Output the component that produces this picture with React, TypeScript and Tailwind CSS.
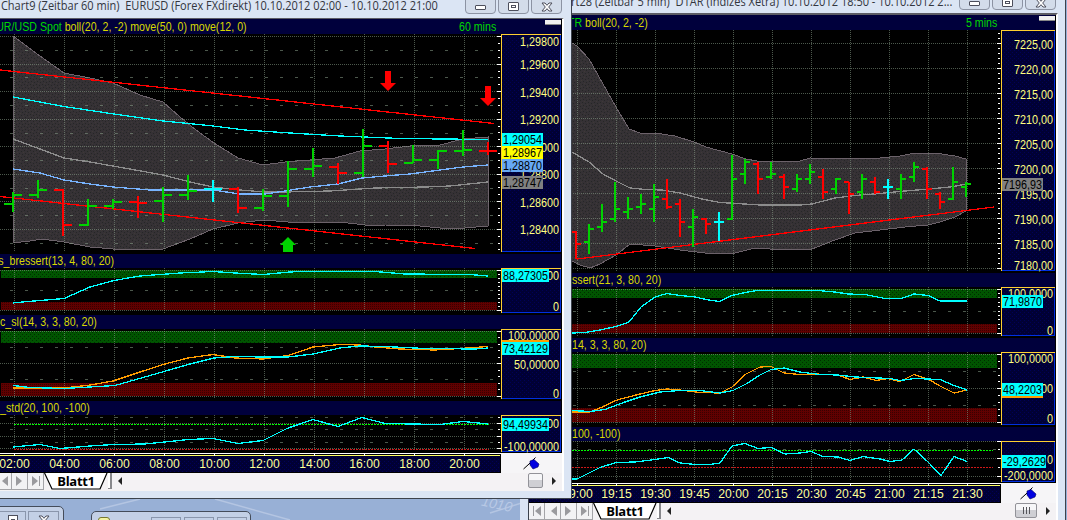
import type { ReactNode } from "react";

type Bar = [x: number, high: number, low: number, open: number, close: number, tone: "g" | "r" | "c"];
type Label = [text: string, y: number];
type Tag = { text: string; y: number; w: number; fill: string; under?: string };

const TONES = { g: "#00d200", r: "#ff0000", c: "#00ffff" };

const eurBars: Bar[] = [
  [13, 192, 212, 204, 195, "g"],
  [38, 180, 198, 195, 190, "g"],
  [63, 189, 236, 190, 225, "r"],
  [88, 199, 226, 225, 206, "g"],
  [113, 199, 209, 206, 202, "g"],
  [138, 196, 218, 202, 203, "r"],
  [163, 187, 222, 201, 195, "g"],
  [188, 175, 200, 195, 191, "g"],
  [213, 180, 202, 189, 189, "c"],
  [238, 187, 213, 189, 208, "r"],
  [263, 189, 211, 208, 196, "g"],
  [288, 161, 207, 196, 169, "g"],
  [313, 148, 177, 169, 166, "g"],
  [338, 163, 184, 167, 173, "r"],
  [363, 129, 177, 173, 146, "g"],
  [388, 141, 173, 146, 164, "r"],
  [413, 145, 163, 163, 160, "g"],
  [438, 150, 169, 160, 151, "g"],
  [463, 130, 156, 151, 150, "g"],
  [488, 142, 155, 151, 151, "r"],
];

const daxBars: Bar[] = [
  [576, 231, 259, 232, 244, "r"],
  [589, 224, 254, 242, 229, "g"],
  [602, 204, 232, 227, 222, "g"],
  [615, 182, 222, 219, 209, "g"],
  [628, 197, 219, 212, 209, "g"],
  [641, 194, 214, 207, 204, "g"],
  [654, 184, 222, 209, 197, "g"],
  [667, 179, 209, 199, 207, "r"],
  [680, 199, 237, 204, 222, "r"],
  [693, 209, 247, 227, 217, "g"],
  [706, 218, 234, 219, 224, "r"],
  [719, 212, 241, 222, 222, "c"],
  [732, 155, 220, 219, 179, "g"],
  [745, 159, 184, 174, 162, "g"],
  [758, 162, 194, 164, 179, "r"],
  [771, 162, 179, 177, 174, "g"],
  [784, 174, 199, 177, 187, "r"],
  [797, 174, 192, 189, 179, "g"],
  [810, 164, 184, 179, 172, "g"],
  [823, 169, 199, 177, 192, "r"],
  [836, 178, 194, 189, 179, "g"],
  [849, 182, 214, 182, 194, "r"],
  [862, 174, 199, 192, 179, "g"],
  [875, 177, 194, 182, 192, "r"],
  [888, 179, 199, 187, 187, "c"],
  [901, 174, 199, 189, 179, "g"],
  [914, 162, 182, 177, 167, "g"],
  [927, 167, 199, 169, 189, "r"],
  [940, 192, 209, 194, 202, "r"],
  [953, 167, 200, 199, 182, "g"],
  [966, 182, 197, 187, 184, "g"],
];

const EUR_BAND =
  "13,36 40,56 64,73 90,78 113,83 140,95 163,102 180,117 196,130 214,143 238,158 263,165 285,162 335,158 360,151 385,149 410,146 440,145 463,139 488,137 488,226 465,228 440,228 420,226 385,225 365,225 340,222 288,222 263,220 238,223 213,229 190,239 163,249 113,249 90,247 64,242 42,239 30,241 13,243";

const DAX_BAND =
  "560,30 572,43 577,46 589,59 603,84 616,107 629,129 640,133 655,133 675,136 694,142 706,147 732,154 746,159 757,161 800,161 810,158 850,159 880,158 900,156 915,153 935,153 955,156 966,159 966,211 955,217 940,222 928,225 905,227 880,230 855,233 835,240 812,249 770,249 755,248 735,253 720,254 705,253 680,250 655,246 630,244 616,255 600,264 590,268 580,265 572,261 560,255";

function Patterns() {
  return (
    <svg width="0" height="0" className="absolute">
      <defs>
        <pattern id="band" width="6" height="6" patternUnits="userSpaceOnUse">
          <rect width="6" height="6" fill="#353135" />
          <path d="M0 0h1v1h-1zM3 1h1v1h-1zM1 3h1v1h-1zM4 4h1v1h-1z" fill="#252725" />
          <path d="M5 2h1v1h-1zM2 5h1v1h-1z" fill="#3e3a36" />
        </pattern>
        <pattern id="green" width="4" height="4" patternUnits="userSpaceOnUse">
          <rect width="4" height="4" fill="#005400" />
          <path d="M0 0h1v1h-1zM2 2h1v1h-1z" fill="#002c00" />
        </pattern>
        <pattern id="red" width="2" height="2" patternUnits="userSpaceOnUse">
          <rect width="2" height="2" fill="#600000" />
          <path d="M0 0h1v1h-1z" fill="#380000" />
        </pattern>
        <pattern id="navy" width="4" height="4" patternUnits="userSpaceOnUse">
          <rect width="4" height="4" fill="#000034" />
          <path d="M0 0h1v1h-1zM2 2h1v1h-1z" fill="#000058" />
        </pattern>
      </defs>
    </svg>
  );
}

function Line({ pts, color, w = 1.3 }: { pts: string; color: string; w?: number }) {
  return <polyline points={pts} fill="none" stroke={color} strokeWidth={w} shapeRendering="crispEdges" />;
}

function Bars({ data, arm }: { data: Bar[]; arm: number }) {
  return (
    <g shapeRendering="crispEdges">
      {data.map(([x, h, l, o, c, t]) => (
        <g key={x} fill={TONES[t]}>
          <rect x={x - 1} y={h} width={2} height={l - h} />
          <rect x={x - arm} y={o - 1} width={arm} height={2} />
          <rect x={x} y={c - 1} width={arm} height={2} />
        </g>
      ))}
    </g>
  );
}

// bitmap-like widths of the terminal's UI font
function textWidth(s: string) {
  return [...s].reduce((n, ch) => n + (ch === "," ? 3 : ch === "-" ? 4 : 6), 0);
}

function Num({ text, x, y, fill, end }: { text: string; x: number; y: number; fill: string; end?: boolean }) {
  return (
    <text
      x={x}
      y={y + 4.5}
      fill={fill}
      textAnchor={end ? "end" : "start"}
      textLength={textWidth(text)}
      lengthAdjust="spacingAndGlyphs"
      className="font-['Liberation_Sans',sans-serif] text-[12.5px]"
    >
      {text}
    </text>
  );
}

type PlotProps = {
  x0: number;
  width: number;
  y: number;
  h: number;
  axis: number;
  axisH: number;
  cols: number[];
  rows: number[];
  dashes?: number[];
  zones?: [number, number, number, number];
  band?: string;
  minor: number[];
  labels: Label[];
  tags: Tag[];
  children: ReactNode;
};

function Plot({ x0, width, y, h, axis, axisH, cols, rows, dashes = [], zones, band, minor, labels, tags, children }: PlotProps) {
  const right = x0 + width;
  const plotRight = axis - 4;
  return (
    <svg viewBox={`${x0} ${y} ${width} ${h}`} width={width} height={h} className="block shrink-0 bg-black">
      {zones && (
        <>
          <rect x={x0 + 1} y={zones[0]} width={plotRight - x0 - 1} height={zones[1]} fill="url(#green)" />
          <rect x={x0 + 1} y={zones[2]} width={plotRight - x0 - 1} height={zones[3]} fill="url(#red)" />
        </>
      )}
      {band && <polygon points={band} fill="url(#band)" stroke="#6c626a" shapeRendering="crispEdges" />}
      <g stroke="#8aa08a" strokeOpacity="0.55" shapeRendering="crispEdges" fill="none">
        {cols.map((c) => (
          <path key={c} d={`M${c + 0.5} ${y}V${y + h - 2}`} strokeDasharray="1 1" />
        ))}
        {rows.map((r) => (
          <path key={r} d={`M${x0} ${r + 0.5}H${plotRight}`} strokeDasharray="1 1" />
        ))}
        {dashes.map((r) => (
          <path key={r} d={`M${cols[0] - 4} ${r + 0.5}H${plotRight}`} strokeDasharray="3 12" />
        ))}
      </g>
      {children}
      <g fill="#ffffff" shapeRendering="crispEdges">
        {minor.map((m) => (
          <rect key={m} x={axis - 3} y={m} width={2} height={1} />
        ))}
        {rows.map((r) => (
          <rect key={r} x={axis - 4} y={r} width={4} height={1} />
        ))}
      </g>
      <g shapeRendering="crispEdges">
        <rect x={axis} y={y} width={right - axis - 1} height={axisH} fill="url(#navy)" />
        <path d={`M${right - 1.5} ${y}V${y + axisH - 0.5}H${axis}`} stroke="#0030e0" fill="none" />
        <path d={`M${axis + 0.5} ${y + axisH}V${y + 0.5}H${right - 1}`} stroke="#ffd030" fill="none" />
      </g>
      {labels.map(([t, ly]) => (
        <Num key={t + ly} text={t} x={right - 3} y={ly} fill="#ffff80" end />
      ))}
      {tags.map((t) => (
        <g key={t.text}>
          {t.under && <rect x={axis + 1} y={t.under === "top" ? t.y - 2 : t.y + 1} width={t.w} height={14} fill="#ff9c00" />}
          <rect x={axis + 1} y={t.y} width={t.w} height={13} fill={t.fill} />
          <Num text={t.text} x={axis + 2} y={t.y + 6.5} fill="#000000" />
        </g>
      ))}
    </svg>
  );
}

function range(from: number, to: number, step: number) {
  const out: number[] = [];
  for (let v = from; v <= to + 0.01; v += step) out.push(Math.round(v));
  return out;
}

function Header({ children, right, className }: { children: ReactNode; right?: ReactNode; className: string }) {
  return (
    <div className={`flex shrink-0 items-center overflow-hidden whitespace-nowrap bg-[#00003c] text-[12.5px] leading-[14px] text-[#d8d800] ${className}`}>
      <span className="origin-left scale-x-[0.85]">{children}</span>
      {right}
    </div>
  );
}

function CaptionButtons({ className }: { className: string }) {
  const base = "flex h-[15px] items-center justify-center rounded-b-[4px] border border-[#8c93a3] bg-[#d3dcea]";
  return (
    <div className={`flex shrink-0 gap-0.5 ${className}`}>
      <div className={`${base} w-[31px]`}>
        <span className="mt-0.5 h-[5px] w-[11px] rounded-[1px] border border-[#4d4f5c] bg-white" />
      </div>
      <div className={`${base} w-[31px]`}>
        <span className="flex h-[9px] w-[11px] items-center justify-center rounded-[1px] border border-[#4d4f5c] bg-white">
          <span className="h-[3px] w-[5px] border border-[#4d4f5c]" />
        </span>
      </div>
      <div className={`${base} w-[31px]`}>
        <svg viewBox="0 0 12 10" className="h-[10px] w-3">
          <path d="M1 1h3l2 2.300L8 1h3L7.700 5 11 9H8L6 6.700 4 9H1l3.300-4z" fill="#fff" stroke="#4d4f5c" />
        </svg>
      </div>
    </div>
  );
}

function Pin() {
  return (
    <svg viewBox="0 0 17 13" className="h-[13px] w-[17px]">
      <path d="M0.500 12L6 7M6 7L12.500 0.500" stroke="#000" fill="none" />
      <path d="M7 4l4-1.500 5 4.500-1 3-5 2-3-4z" fill="#0000e0" stroke="#000060" strokeWidth="0.600" />
    </svg>
  );
}

function TimeAxis({ x0, width, axis, cols, times, h }: { x0: number; width: number; axis: number; cols: number[]; times: string[]; h: number }) {
  return (
    <div className="flex shrink-0 bg-[#f6f5f7]">
      <svg viewBox={`${x0} 0 ${axis - x0} ${h}`} width={axis - x0} height={h} className="block">
        <rect x={x0} width={axis - x0} height={h} fill="#000" />
        <rect x={x0} y="0" width={axis - x0} height="1" fill="#fff" />
        <rect x={x0} y="2" width={axis - x0 - 1} height="1" fill="#ffff60" />
        <rect x={x0} y="3" width={axis - x0 - 1} height={h - 4} fill="url(#navy)" />
        {cols.map((c, i) => (
          <g key={c}>
            <rect x={c} y="0" width="1" height="3" fill="#fff" />
            <text x={c + 0.5} y="15" textAnchor="middle" fill="#ffff98" textLength="30.5" lengthAdjust="spacingAndGlyphs" className="font-['Liberation_Sans',sans-serif] text-[13px]">
              {times[i]}
            </text>
          </g>
        ))}
      </svg>
      <div className="flex items-center justify-center" style={{ width: x0 + width - axis }}>
        <Pin />
      </div>
    </div>
  );
}

function NavButton({ flip, end }: { flip?: boolean; end?: boolean }) {
  return (
    <div className="flex h-full w-4 shrink-0 items-center justify-center border-r border-b border-[#a4a4a8] bg-[#f2f2f4]">
      <svg viewBox="0 0 10 12" className={`h-3 w-2.5 ${flip ? "-scale-x-100" : ""}`}>
        <path d="M1 1l6 5-6 5z" fill="#9a9a9e" />
        {end && <path d="M8.500 1v10" stroke="#9a9a9e" />}
      </svg>
    </div>
  );
}

function Sheets({ className, children, grip }: { className: string; children: ReactNode; grip?: boolean }) {
  return (
    <div className={`flex shrink-0 items-start overflow-hidden bg-[#f4f2f4] ${className}`}>
      {children}
      <div className="relative flex h-[17px] w-16 shrink-0 items-center justify-center">
        <svg viewBox="0 0 64 17" className="absolute inset-0 h-[17px] w-16">
          <path d="M0.500 0L8 16H56L63 0" fill="#fff" stroke="#000" strokeWidth="1.200" />
        </svg>
        <span className="relative text-[13px] leading-none font-bold tracking-[-0.3px] text-black font-['Open_Sans',sans-serif]">Blatt1</span>
      </div>
      <div className="h-4 w-1 shrink-0 border-r-2 border-b border-[#88888c] bg-white" />
      <svg viewBox="0 0 4 8" className="mt-1 ml-1.5 h-2 w-1 shrink-0">
        <path d="M4 0v8L0 4z" fill="#222" />
      </svg>
      <div className="grow" />
      <div
        className={`flex h-[15px] shrink-0 items-center justify-center gap-0.5 rounded-[2px] border border-[#929298] bg-linear-to-b from-[#f6f6f8] from-50% to-[#cfcfd4] to-50% ${grip ? "w-[22px]" : "w-[15px]"}`}
      >
        {grip && [0, 1, 2].map((i) => <span key={i} className="h-[7px] w-px bg-[#55555a]" />)}
      </div>
      <svg viewBox="0 0 4 8" className="mt-1 mr-1.5 ml-[9px] h-2 w-1 shrink-0">
        <path d="M0 0v8l4-4z" fill="#222" />
      </svg>
    </div>
  );
}

function Arrow({ x, y, up }: { x: number; y: number; up?: boolean }) {
  return up ? (
    <path d={`M${x} ${y}l8 8h-3v7h-10v-7h-3z`} fill="#00d200" />
  ) : (
    <path d={`M${x - 3} ${y}h6v12h5l-8 8-8-8h5z`} fill="#ff0000" />
  );
}

function EurWindow() {
  const cols = range(14, 464, 50);
  const g = { x0: 0, width: 562, axis: 501, cols };
  return (
    <div className="absolute top-0 left-0 z-10 flex h-[499px] w-[572px] flex-col border-r border-b border-[#3c424c] bg-[#dbe5f4]">
      <div className="flex h-[18px] shrink-0 items-start justify-between pr-[9px]">
        <span className="-mt-0.5 w-[440px] origin-left scale-x-[0.882] pl-px text-[12.5px] leading-[15px] whitespace-pre text-[#33363e] font-['Open_Sans',sans-serif]">
          {"Chart9 (Zeitbar 60 min)  EURUSD (Forex FXdirekt) 10.10.2012 02:00 - 10.10.2012 21:00"}
        </span>
        <CaptionButtons className="-mt-px" />
      </div>
      <div className="flex h-[473px] w-[564px] shrink-0 flex-col border-t border-r-2 border-t-[#5c5c64] border-r-white bg-black font-['Liberation_Sans',sans-serif]">
        <Header
          className="h-[15px] w-[561px] justify-between pl-[3px]"
          right={
            <span className="flex items-center">
              <span className="inline-block origin-left scale-x-[0.85] text-[#00d800]">60 mins</span>
              <span className="ml-[42px] h-[5px] w-4 self-start border-b border-[#888] bg-[#f0f0f0]" />
            </span>
          }
        >
          <span className="-ml-2 text-[#00d800]">UR/USD Spot</span> boll(20, 2, -2) move(50, 0) move(12, 0)
        </Header>
        <Plot
          {...g}
          y={34}
          h={220}
          axisH={218}
          band={EUR_BAND}
          rows={[36, 64, 91, 119, 146, 174, 201, 229]}
          dashes={[50, 77, 105, 133, 160, 188, 215, 243]}
          minor={range(43, 250, 6.88)}
          labels={[["1,29800", 41], ["1,29600", 64.5], ["1,29400", 92], ["1,29200", 119.5], ["1,29000", 147], ["1,28800", 174.5], ["1,28600", 202], ["1,28400", 229.5]]}
          tags={[
            { text: "1,28747", y: 176, w: 41, fill: "#808080" },
            { text: "1,28870", y: 159, w: 41, fill: "#66a8f4" },
            { text: "1,28967", y: 146, w: 41, fill: "#ffff00" },
            { text: "1,29054", y: 133, w: 41, fill: "#00ffff" },
          ]}
        >
          <Line color="#8c8c8c" pts="13,139 40,149 64,158 90,162 113,166 163,175 190,182 213,187 240,190 265,192 285,192 330,191 375,188 425,187 450,186 488,182" />
          <Line color="#78b4ff" pts="13,169 40,173 64,180 90,184 113,187 150,190 213,190 240,194 265,194 285,191 310,187 338,184 362,178 385,176 410,174 440,170 463,167 488,165" />
          <Line color="#00ffff" pts="13,97 64,106.500 114,114 163,121 213,126 245,130 290,133 340,136 400,138.500 488,139.500" />
          <Line color="#ff0000" pts="0,70 494,123.500" />
          <Line color="#ff0000" pts="0,196.500 475,248.500" />
          <Bars data={eurBars} arm={9} />
          <Arrow x={388} y={71} />
          <Arrow x={488} y={86} />
          <Arrow x={288} y={237} up />
        </Plot>
        <Header className="h-[14px] w-[561px]">
          <span className="-ml-0.5">s_bressert(13, 4, 80, 20)</span>
        </Header>
        <Plot
          {...g}
          y={268}
          h={47}
          axisH={45}
          zones={[270, 8, 302, 8]}
          rows={[270, 310]}
          dashes={[290]}
          minor={range(274, 308, 4)}
          labels={[["100,00000", 275], ["0", 306.5]]}
          tags={[{ text: "88,27305", y: 269, w: 47, fill: "#00ffff" }]}
        >
          <Line color="#00ffff" pts="13,303 28,301.500 64,298.500 90,287 114,280.500 140,276 180,273 213,271.500 235,273 263,274.500 290,272 302,271.500 375,271.500 405,274 470,274.500 488,276" />
        </Plot>
        <Header className="h-[14px] w-[561px]">c_sl(14, 3, 3, 80, 20)</Header>
        <Plot
          {...g}
          y={329}
          h={72}
          axisH={70}
          zones={[331, 12, 383, 13]}
          rows={[331, 363, 396]}
          dashes={[347, 379]}
          minor={range(337, 393, 6.5)}
          labels={[["100,00000", 335.5], ["50,00000", 364], ["0", 393]]}
          tags={[{ text: "73,42129", y: 342, w: 47, fill: "#00ffff", under: "top" }]}
        >
          <Line color="#ff9c00" pts="13,388 64,388 90,385 113,381 140,372 163,364.500 188,358 213,354.500 235,358 263,359 288,355.500 313,347 340,344.500 360,345 375,347 400,349 435,350 460,348.500 488,346.500" />
          <Line color="#00ffff" pts="13,385.500 30,387.500 64,388.500 90,387 115,385.500 150,375.500 190,364 214,358 235,356.500 263,357 288,357 313,354 340,348 360,346 385,346.500 425,348.500 475,349 488,348" />
        </Plot>
        <Header className="h-[14px] w-[561px]">_std(20, 100, -100)</Header>
        <Plot
          {...g}
          y={415}
          h={38}
          axisH={37}
          rows={[423, 436, 448]}
          dashes={[417, 429, 442]}
          minor={[417, 429, 442]}
          labels={[["100,00000", 423.5], ["-100,00000", 446]]}
          tags={[{ text: "94,49934", y: 418, w: 47, fill: "#00ffff" }]}
        >
          <path d="M14 424.500H489" stroke="#00ff00" strokeDasharray="2 1" shapeRendering="crispEdges" />
          <path d="M14 449.500H489" stroke="#d01818" strokeDasharray="2 1" shapeRendering="crispEdges" />
          <Line color="#00ffff" pts="13,447 40,444.500 60,448.500 90,446 113,444.500 145,444 165,442 188,439.500 213,438.500 238,443.500 263,440.500 288,428 300,424 313,419.500 338,426.500 362,417.500 385,423.500 440,424.500 463,421.500 488,424" />
        </Plot>
        <TimeAxis {...g} h={20} times={["02:00", "04:00", "06:00", "08:00", "10:00", "12:00", "14:00", "16:00", "18:00", "20:00"]} />
        <Sheets className="h-[18px]">
          <div className="flex h-[17px] w-11 shrink-0 justify-end">
            <NavButton flip />
            <NavButton />
            <NavButton end />
          </div>
        </Sheets>
      </div>
    </div>
  );
}

function DaxWindow() {
  const cols = range(577, 967, 39);
  const g = { x0: 529, width: 527, axis: 1001, cols };
  return (
    <div className="absolute top-0 left-[520px] flex h-[520px] w-[546px] flex-col overflow-hidden border-r border-[#3c424c] bg-[#dbe5f4] pl-2">
      <div className="flex h-[13px] shrink-0 items-start justify-between pr-[9px] pl-[43px]">
        <span className="-mt-1.5 w-[385px] origin-left scale-x-[0.882] text-[12.5px] leading-[15px] whitespace-pre text-[#33363e] font-['Open_Sans',sans-serif]">
          {"rt28 (Zeitbar 5 min)  D1AR (Indizes Xetra) 10.10.2012 18:50 - 10.10.2012 2..."}
        </span>
        <CaptionButtons className="-mt-[5px]" />
      </div>
      <div className="flex w-[530px] shrink-0 flex-col border-t-2 border-r-2 border-l border-t-[#5c5c64] border-r-white border-l-[#3c424c] bg-black font-['Liberation_Sans',sans-serif]">
        <Header
          className="h-[15px] w-[526px] justify-between pl-[39px]"
          right={
            <span className="flex items-center">
              <span className="inline-block origin-left scale-x-[0.85] text-[#00d800]">5 mins</span>
              <span className="ml-[36px] h-[5px] w-4 self-start border-b border-[#888] bg-[#f0f0f0]" />
            </span>
          }
        >
          <span className="text-[#00d800]">TR</span> boll(20, 2, -2)
        </Header>
        <Plot
          {...g}
          y={30}
          h={243}
          axisH={241}
          band={DAX_BAND}
          rows={[43, 68, 93, 118, 143, 168, 193, 218, 243, 268]}
          minor={range(33, 268, 5)}
          labels={[["7225,00", 44], ["7220,00", 69], ["7215,00", 94], ["7210,00", 119], ["7205,00", 144], ["7200,00", 169], ["7195,00", 194], ["7190,00", 219], ["7185,00", 244], ["7180,00", 265]]}
          tags={[{ text: "7196,93", y: 178, w: 41, fill: "#808080" }]}
        >
          <Line color="#8c8c8c" pts="572,152 589,162 603,174 616,181 630,188 645,189.500 662,190 680,193 702,199 720,202.500 760,205 800,205 812,204 835,198 855,195.500 880,193.500 905,191 935,188.500 950,187 967,184" />
          <Line color="#ff0000" pts="577,259 994,207" />
          <Bars data={daxBars} arm={5} />
        </Plot>
        <Header className="h-[14px] w-[526px] pl-[43px]">ssert(21, 3, 80, 20)</Header>
        <Plot
          {...g}
          y={287}
          h={51}
          axisH={49}
          zones={[289, 9, 324, 9]}
          rows={[289, 333]}
          dashes={[311]}
          minor={range(293, 330, 4.4)}
          labels={[["100,0000", 293.5], ["0", 330]]}
          tags={[{ text: "71,9870", y: 295, w: 41, fill: "#00ffff" }]}
        >
          <Line color="#00ffff" pts="572,333 585,332.500 600,330 616,326.500 629,322 641,307 655,297 667,293.500 680,295.500 695,297 706,299.500 719,301.500 732,295.500 745,292.500 757,290.500 818,290.500 835,292 848,294 865,294.500 885,298.500 901,298.500 914,294 928,295.500 940,301 967,301" />
        </Plot>
        <Header className="h-[14px] w-[526px] pl-[43px]">14, 3, 3, 80, 20)</Header>
        <Plot
          {...g}
          y={352}
          h={75}
          axisH={73}
          zones={[354, 14, 408, 14]}
          rows={[354, 388, 422]}
          dashes={[371, 405]}
          minor={range(361, 418, 6.8)}
          labels={[["100,0000", 358.5], ["50,0000", 388.5], ["0", 418.5]]}
          tags={[{ text: "48,2203", y: 383, w: 41, fill: "#00ffff", under: "bottom" }]}
        >
          <Line color="#ff9c00" pts="572,412 590,412 600,408 617,400 640,394 655,390.500 667,389 680,390 700,392.500 720,393 732,387 746,374 760,367 771,366.500 784,373 800,374.500 815,374 838,375 850,379.500 863,377 876,380.500 888,378.500 900,381.500 914,374.500 928,379 940,386 954,393 967,390" />
          <Line color="#00ffff" pts="572,410.500 590,411.500 605,409.500 625,402 640,397 660,392 680,390.500 700,390.500 720,393 733,390.500 746,384 760,375 771,369.500 784,368 800,372 820,374.500 838,375 855,377 890,378.500 900,380.500 915,378.500 940,379.500 954,385.500 967,390" />
        </Plot>
        <Header className="h-[14px] w-[526px] pl-[43px]">100, -100)</Header>
        <Plot
          {...g}
          y={441}
          h={42}
          axisH={41}
          rows={[441, 458, 476]}
          dashes={[449]}
          minor={[449, 467]}
          labels={[["0", 459], ["-200,0000", 475.5]]}
          tags={[{ text: "-29,2629", y: 455, w: 44, fill: "#00ffff" }]}
        >
          <path d="M572 450.500H993" stroke="#00ff00" strokeDasharray="2 1" shapeRendering="crispEdges" />
          <path d="M572 467.500H993" stroke="#d01818" strokeDasharray="2 1" shapeRendering="crispEdges" />
          <Line color="#00ffff" pts="572,479 577,479 600,467.500 616,462.500 635,462 655,459.500 668,457.500 680,463 695,464.500 710,464.500 720,463 732,446 745,443.500 758,448.500 771,447.500 785,454 800,453 811,451.500 823,456.500 838,457 850,460.500 863,456.500 880,459 890,461.500 902,460 914,449 928,462 941,475.500 954,456.500 967,461.500" />
        </Plot>
        <TimeAxis {...g} h={20} times={["19:00", "19:15", "19:30", "19:45", "20:00", "20:15", "20:30", "20:45", "21:00", "21:15", "21:30"]} />
        <Sheets className="h-[18px]" grip>
          <div className="flex h-[17px] w-16 shrink-0">
            <NavButton flip end />
            <NavButton flip />
            <NavButton />
            <NavButton end />
          </div>
        </Sheets>
      </div>
    </div>
  );
}

function Desktop() {
  return (
    <>
      <svg viewBox="0 0 530 21" className="absolute top-[499px] left-0 h-[21px] w-[530px]">
        <path d="M215 0L290 21M490 14L528 2M100 10L140 0" stroke="#b4c5e2" strokeWidth="1.500" />
        <text x="481" y="7" fill="#b9c9e5" transform="rotate(12 483 5)" className="font-['Liberation_Sans',sans-serif] text-[14px] italic">
          1010
        </text>
      </svg>
      <div className="absolute top-[506px] left-[-8px] flex h-6 w-[72px] items-start justify-end gap-0.5 rounded-t-[5px] border border-[#444c5a] bg-[#c3d0e6] pt-1 pr-1">
        <div className="flex h-5 w-[27px] justify-center border border-[#8a96ac] pt-[3px]">
          <span className="flex h-3 w-2.5 items-center justify-center border border-[#4d4f5c] bg-white">
            <span className="size-1 border border-[#4d4f5c]" />
          </span>
        </div>
        <div className="flex h-5 w-[31px] justify-center border border-[#8a96ac] pt-[3px]">
          <svg viewBox="0 0 12 10" className="h-2.5 w-3">
            <path d="M1 1h3l2 2.300L8 1h3L7.700 5 11 9H8L6 6.700 4 9H1l3.300-4z" fill="#fff" stroke="#4d4f5c" />
          </svg>
        </div>
      </div>
      <div className="absolute top-[511px] left-[91px] flex h-6 w-[160px] items-start gap-[3px] rounded-t-[5px] border border-[#444c5a] bg-[#c3d0e6] pt-[5px] pl-1.5">
        <span className="mr-[38px] h-3 w-3 rounded-t-[3px] border border-[#777730] bg-[#f4f4a0]" />
        <span className="flex h-5 w-[30px] justify-center border border-[#8a96ac] pt-0.5">
          <span className="h-1 w-2.5 bg-[#555]" />
        </span>
        <span className="h-5 w-[30px] border border-[#8a96ac]" />
        <span className="h-5 w-[30px] border border-[#8a96ac]" />
      </div>
    </>
  );
}

export default function App() {
  return (
    <div className="relative h-[520px] w-[1067px] overflow-hidden bg-[#98b0d6]">
      <Patterns />
      <Desktop />
      <DaxWindow />
      <EurWindow />
    </div>
  );
}
